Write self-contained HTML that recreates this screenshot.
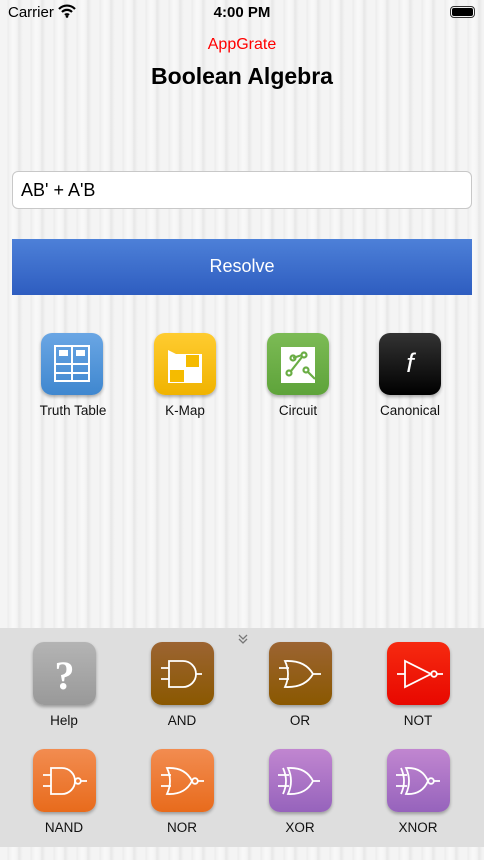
<!DOCTYPE html>
<html><head><meta charset="utf-8"><style>
*{margin:0;padding:0;box-sizing:border-box}
body{width:484px;height:860px;overflow:hidden;position:relative;font-family:"Liberation Sans",sans-serif;
background:#f4f4f4;
background-image:repeating-linear-gradient(90deg,rgba(0,0,0,0) 0,rgba(0,0,0,0) 7px,rgba(0,0,0,.035) 8px,rgba(0,0,0,0) 10px,rgba(255,255,255,.5) 13px,rgba(0,0,0,0) 17px,rgba(0,0,0,.05) 19px,rgba(0,0,0,0) 23px);}
.abs{position:absolute}
.status{top:4px;font-size:15px;color:#000}
.icon{position:absolute;border-radius:11px;box-shadow:0 2px 3px rgba(0,0,0,.3)}
.lbl{position:absolute;width:120px;text-align:center;font-size:13.5px;color:#111}
svg{position:absolute;left:0;top:0}
</style></head><body>
<div class="abs status" style="left:8px">Carrier</div>
<svg class="abs" style="left:58px;top:4px" width="18" height="14" viewBox="0 0 18 14"><path d="M1 5a11 11 0 0 1 16 0M4 8a7 7 0 0 1 10 0M7 11a3 3 0 0 1 4 0" stroke="#000" stroke-width="2.2" fill="none"/><circle cx="9" cy="12.5" r="1.3"/></svg>
<div class="abs status" style="left:0;width:484px;text-align:center;font-weight:bold">4:00 PM</div>
<div class="abs" style="left:450px;top:6px;width:25px;height:12px;border:1.5px solid #333;border-radius:4px;padding:1px"><div style="background:#000;width:100%;height:100%;border-radius:2px"></div></div>
<div class="abs" style="left:0;top:36px;width:484px;text-align:center;color:#f00;font-size:16px">AppGrate</div>
<div class="abs" style="left:0;top:63px;width:484px;text-align:center;color:#000;font-size:23px;font-weight:bold">Boolean Algebra</div>
<div class="abs" style="left:12px;top:171px;width:460px;height:38px;background:#fff;border:1px solid #c8c8c8;border-radius:6px;font-size:18px;padding:8px 0 0 8px">AB' + A'B</div>
<div class="abs" style="left:12px;top:239px;width:460px;height:56px;background:linear-gradient(#4d80d8,#2e5dc0);color:#fff;font-size:18px;text-align:center;line-height:55px">Resolve</div>

<div class="icon" style="left:41px;top:333px;width:62px;height:62px;background:linear-gradient(#6aa6e4,#3f87cf)"><svg width="62" height="62"><g stroke="#fff" stroke-width="2" fill="none"><rect x="14" y="13" width="34" height="35"/><path d="M14 31H48M14 40H48M31 13V48"/></g><rect x="18" y="17" width="9" height="6" fill="#fff"/><rect x="35" y="17" width="9" height="6" fill="#fff"/></svg></div>
<div class="lbl" style="left:13px;top:403px">Truth Table</div>
<div class="icon" style="left:154px;top:333px;width:62px;height:62px;background:linear-gradient(#ffcc30,#f0b300)"><svg width="62" height="62"><path d="M14 17L22 21H48V50H14Z" fill="#fff"/><rect x="32" y="22" width="13" height="12" fill="#f5bb00"/><rect x="16" y="37" width="14" height="12" fill="#f5bb00"/></svg></div>
<div class="lbl" style="left:125px;top:403px">K-Map</div>
<div class="icon" style="left:267px;top:333px;width:62px;height:62px;background:linear-gradient(#7cbb55,#5ea33a)"><svg width="62" height="62"><path d="M14 14H48V50H14Z" fill="#fff"/><g stroke="#6aad45" stroke-width="2.2" fill="none"><circle cx="26" cy="25" r="2.5"/><circle cx="37" cy="22" r="2.5"/><circle cx="22" cy="40" r="2.5"/><circle cx="39" cy="37" r="2.5"/><path d="M26 25L35 22M35 24L24 38M41 39L48 46"/></g></svg></div>
<div class="lbl" style="left:238px;top:403px">Circuit</div>
<div class="icon" style="left:379px;top:333px;width:62px;height:62px;background:linear-gradient(#333,#000)"><div style="position:absolute;width:62px;text-align:center;top:15px;color:#fff;font-family:'Liberation Sans',sans-serif;font-style:italic;font-size:27px">f</div></div>
<div class="lbl" style="left:350px;top:403px">Canonical</div>

<div class="abs" style="left:0;top:628px;width:484px;height:219px;background:#dedede"></div>
<svg class="abs" style="left:237px;top:633px" width="12" height="12"><path d="M2 2L6 6L10 2M2 6L6 10L10 6" stroke="#777" stroke-width="1.3" fill="none"/></svg>

<div class="icon" style="left:33px;top:642px;width:63px;height:63px;background:linear-gradient(#b4b4b4,#999)"><div style="position:absolute;width:63px;text-align:center;top:10px;color:#fff;font-family:'Liberation Serif',serif;font-weight:bold;font-size:40px">?</div></div>
<div class="lbl" style="left:4px;top:713px">Help</div>
<div class="icon" style="left:151px;top:642px;width:63px;height:63px;background:linear-gradient(#9c6432,#8a5800)"><svg width="63" height="63" fill="none" stroke="#fff" stroke-width="1.8"><path d="M10 26H18M10 37H18M18 19H32A13 13 0 0 1 32 45H18Z M45 32H51"/></svg></div>
<div class="lbl" style="left:122px;top:713px">AND</div>
<div class="icon" style="left:269px;top:642px;width:63px;height:63px;background:linear-gradient(#9c6432,#8a5800)"><svg width="63" height="63" fill="none" stroke="#fff" stroke-width="1.8"><path d="M10 26H20M10 37H20M16 19Q22 32 16 45Q36 46 44 32Q36 18 16 19Z M44 32H52"/></svg></div>
<div class="lbl" style="left:240px;top:713px">OR</div>
<div class="icon" style="left:387px;top:642px;width:63px;height:63px;background:linear-gradient(#f62a10,#e80800)"><svg width="63" height="63" fill="none" stroke="#fff" stroke-width="1.8"><path d="M10 32H18M18 19V45L44 32Z M50 32H56"/><circle cx="47" cy="32" r="2.8"/></svg></div>
<div class="lbl" style="left:358px;top:713px">NOT</div>

<div class="icon" style="left:33px;top:749px;width:63px;height:63px;background:linear-gradient(#f28c50,#e86b1c)"><svg width="63" height="63" fill="none" stroke="#fff" stroke-width="1.8"><path d="M10 26H18M10 37H18M18 19H29A13 13 0 0 1 29 45H18Z M48 32H54"/><circle cx="45" cy="32" r="2.8"/></svg></div>
<div class="lbl" style="left:4px;top:820px">NAND</div>
<div class="icon" style="left:151px;top:749px;width:63px;height:63px;background:linear-gradient(#f28c50,#e86b1c)"><svg width="63" height="63" fill="none" stroke="#fff" stroke-width="1.8"><path d="M10 26H20M10 37H20M16 19Q22 32 16 45Q34 46 41 32Q34 18 16 19Z M47 32H53"/><circle cx="44" cy="32" r="2.8"/></svg></div>
<div class="lbl" style="left:122px;top:820px">NOR</div>
<div class="icon" style="left:269px;top:749px;width:63px;height:63px;background:linear-gradient(#c186d0,#9663bc)"><svg width="63" height="63" fill="none" stroke="#fff" stroke-width="1.8"><path d="M9 26H20M9 37H20M14 19Q20 32 14 45M19 19Q25 32 19 45Q37 46 44 32Q37 18 19 19Z M44 32H51"/></svg></div>
<div class="lbl" style="left:240px;top:820px">XOR</div>
<div class="icon" style="left:387px;top:749px;width:63px;height:63px;background:linear-gradient(#c186d0,#9663bc)"><svg width="63" height="63" fill="none" stroke="#fff" stroke-width="1.8"><path d="M9 26H20M9 37H20M14 19Q20 32 14 45M19 19Q25 32 19 45Q35 46 41 32Q35 18 19 19Z M47 32H53"/><circle cx="44" cy="32" r="2.8"/></svg></div>
<div class="lbl" style="left:358px;top:820px">XNOR</div>
</body></html>
